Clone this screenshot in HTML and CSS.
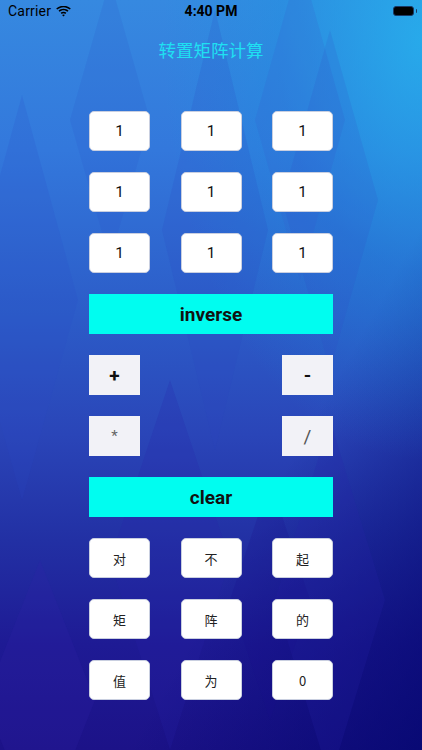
FILE: index.html
```html
<!DOCTYPE html>
<html lang="zh">
<head>
    <meta charset="UTF-8" />
    <meta name="viewport" content="width=device-width, initial-scale=1.0" />
    <title>转置矩阵计算</title>
    <link rel="stylesheet" href="styles.css">
</head>
<body>
    <div class="phone">
        <!-- decorative background diamonds -->
        <svg class="bg-shapes" width="422" height="750" viewBox="0 0 422 750">
            <polygon points="22,95 78,300 22,500 -34,300" fill="#2c48c4" opacity="0.16" />
            <polygon points="110,-20 150,120 110,260 70,120" fill="#2a4cc6" opacity="0.14" />
            <polygon points="215,10 268,230 215,450 162,230" fill="#2a42c0" opacity="0.16" />
            <polygon points="300,-40 345,120 300,280 255,120" fill="#3a58d0" opacity="0.16" />
            <polygon points="330,30 378,200 330,370 282,200" fill="#3546c8" opacity="0.14" />
            <polygon points="170,380 230,560 170,750 110,560" fill="#2a24a8" opacity="0.2" />
            <polygon points="330,420 385,600 330,780 275,600" fill="#2a22a8" opacity="0.2" />
            <polygon points="40,560 95,700 40,840 -15,700" fill="#3024aa" opacity="0.2" />
            <polygon points="270,480 310,600 270,720 230,600" fill="#18108a" opacity="0.2" />
        </svg>

        <div class="status-bar">
            <div class="carrier">
                Carrier
                <svg class="wifi" width="15" height="11" viewBox="0 0 15 11">
                    <path d="M7.5 1.2c2.4 0 4.6.9 6.3 2.4l1-1.1C12.8.7 10.3-.3 7.5-.3S2.2.7.2 2.5l1 1.1C2.9 2.1 5.1 1.2 7.5 1.2z" fill="#000" />
                    <path d="M7.5 4.3c1.5 0 2.9.6 3.9 1.5l1.1-1.1C11.2 3.5 9.4 2.8 7.5 2.8S3.8 3.5 2.5 4.7l1.1 1.1c1-.9 2.4-1.5 3.9-1.5z" fill="#000" />
                    <path d="M7.5 7.2c.7 0 1.3.3 1.8.7l1.1-1.1C9.6 6.1 8.6 5.7 7.5 5.7s-2.1.4-2.9 1.1l1.1 1.1c.5-.4 1.1-.7 1.8-.7z" fill="#000" />
                    <path d="M7.5 10.6l1.4-1.5c-.4-.3-.9-.5-1.4-.5s-1 .2-1.4.5z" fill="#000" />
                </svg>
            </div>
            <div class="time">4:40 PM</div>
            <div class="battery"><span class="battery-level"></span></div>
        </div>

        <h1 class="title">转置矩阵计算</h1>

        <div class="panel">
            <div class="matrix">
                <div class="cell">1</div>
                <div class="cell">1</div>
                <div class="cell">1</div>
                <div class="cell">1</div>
                <div class="cell">1</div>
                <div class="cell">1</div>
                <div class="cell">1</div>
                <div class="cell">1</div>
                <div class="cell">1</div>
            </div>

            <button class="wide-btn">inverse</button>

            <div class="ops">
                <button class="op-btn bold">+</button>
                <button class="op-btn bold">-</button>
            </div>
            <div class="ops">
                <button class="op-btn star">*</button>
                <button class="op-btn slash">/</button>
            </div>

            <button class="wide-btn">clear</button>

            <div class="matrix result">
                <div class="cell">对</div>
                <div class="cell">不</div>
                <div class="cell">起</div>
                <div class="cell">矩</div>
                <div class="cell">阵</div>
                <div class="cell">的</div>
                <div class="cell">值</div>
                <div class="cell">为</div>
                <div class="cell">0</div>
            </div>
        </div>
    </div>
</body>
</html>
```

FILE: styles.css
```css
body {
    margin: 0;
    padding: 0;
    font-family: Roboto, "Liberation Sans", "Noto Sans CJK SC", sans-serif;
}

.phone {
    position: relative;
    width: 422px;
    height: 750px;
    overflow: hidden;
    background:
        radial-gradient(ellipse 260px 420px at 422px 40px, rgba(35, 182, 238, 0.75) 0%, rgba(25, 150, 225, 0.35) 55%, rgba(25, 140, 220, 0) 100%),
        linear-gradient(to top left, rgba(2, 6, 110, 0.75) 0%, rgba(2, 6, 110, 0) 35%),
        linear-gradient(to bottom, #3689e0 0%, #3378dc 20%, #2c5cc8 42%, #2a45b8 58%, #2230a4 72%, #1e1a94 86%, #1c1288 100%);
}

.bg-shapes {
    position: absolute;
    top: 0;
    left: 0;
}

.status-bar {
    position: relative;
    height: 22px;
    display: flex;
    align-items: center;
    justify-content: space-between;
    padding: 0 8px;
    font-size: 14px;
    color: #000;
}

.carrier {
    display: flex;
    align-items: center;
    gap: 5px;
    width: 100px;
    letter-spacing: 0.2px;
}

.time {
    font-weight: bold;
    font-size: 14px;
}

.battery {
    width: 100px;
    display: flex;
    justify-content: flex-end;
}

.battery-level {
    position: relative;
    width: 19px;
    height: 8px;
    background: #000;
    border: 1.5px solid #1a3a66;
    border-radius: 3px;
}

.battery-level::after {
    content: "";
    position: absolute;
    right: -4px;
    top: 2px;
    width: 1.5px;
    height: 4px;
    background: #1a3a66;
    border-radius: 0 1px 1px 0;
}

.title {
    position: relative;
    margin: 16px 0 0;
    height: 24px;
    line-height: 24px;
    text-align: center;
    font-size: 17.5px;
    font-weight: normal;
    color: #1fe0f2;
    font-family: "Noto Sans CJK SC", sans-serif;
}

.panel {
    position: relative;
    width: 244px;
    margin: 49px auto 0;
    display: flex;
    flex-direction: column;
    gap: 21px;
}

.matrix {
    display: grid;
    grid-template-columns: 61px 61px 61px;
    justify-content: space-between;
    row-gap: 21px;
}

.cell {
    height: 40px;
    box-sizing: border-box;
    background: #fff;
    border: 1px solid #c9cfe0;
    border-radius: 5px;
    display: flex;
    align-items: center;
    justify-content: center;
    font-size: 15.5px;
    color: #111;
}

.result .cell {
    font-size: 13px;
    color: #222;
    font-family: "Noto Sans CJK SC", sans-serif;
}

.wide-btn {
    height: 40px;
    border: 0;
    margin: 0;
    padding: 0;
    background: #00fdf0;
    font-family: Roboto, "Liberation Sans", sans-serif;
    font-size: 19px;
    font-weight: bold;
    color: #111;
}

.ops {
    display: flex;
    justify-content: space-between;
}

.op-btn {
    width: 51px;
    height: 40px;
    margin: 0;
    padding: 0;
    border: 0;
    background: #f2f2f7;
    font-family: Roboto, "Liberation Sans", sans-serif;
    font-size: 19px;
    color: #111;
}

.op-btn.bold {
    font-weight: bold;
}

.op-btn.star {
    font-size: 15px;
    color: #666;
}

.op-btn.slash {
    font-size: 19px;
    color: #555;
}
```
